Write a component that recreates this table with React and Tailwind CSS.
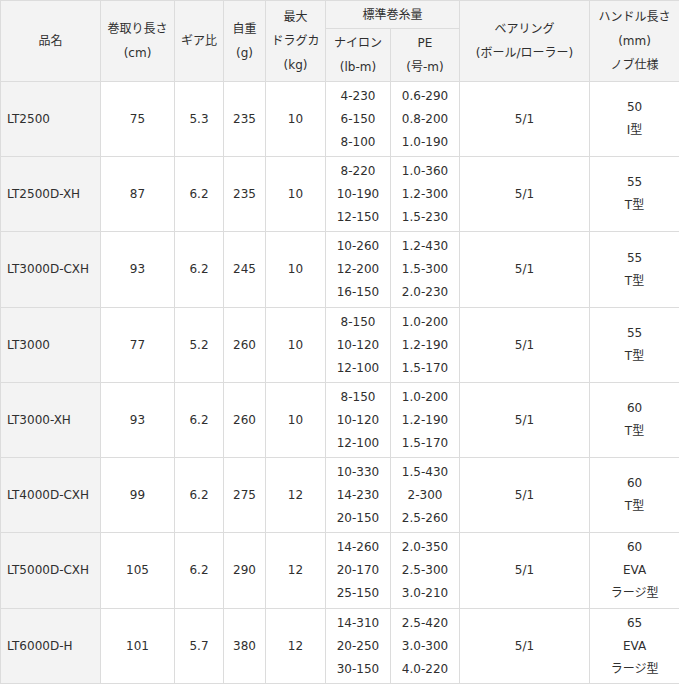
const rows = [
  { name: "LT2500", len: "75", gear: "5.3", weight: "235", drag: "10", nylon: ["4-230", "6-150", "8-100"], pe: ["0.6-290", "0.8-200", "1.0-190"], bearing: "5/1", handle: ["50", "I型"], h: "h-[75px]" },
  { name: "LT2500D-XH", len: "87", gear: "6.2", weight: "235", drag: "10", nylon: ["8-220", "10-190", "12-150"], pe: ["1.0-360", "1.2-300", "1.5-230"], bearing: "5/1", handle: ["55", "T型"], h: "h-[75px]" },
  { name: "LT3000D-CXH", len: "93", gear: "6.2", weight: "245", drag: "10", nylon: ["10-260", "12-200", "16-150"], pe: ["1.2-430", "1.5-300", "2.0-230"], bearing: "5/1", handle: ["55", "T型"], h: "h-[76px]" },
  { name: "LT3000", len: "77", gear: "5.2", weight: "260", drag: "10", nylon: ["8-150", "10-120", "12-100"], pe: ["1.0-200", "1.2-190", "1.5-170"], bearing: "5/1", handle: ["55", "T型"], h: "h-[75px]" },
  { name: "LT3000-XH", len: "93", gear: "6.2", weight: "260", drag: "10", nylon: ["8-150", "10-120", "12-100"], pe: ["1.0-200", "1.2-190", "1.5-170"], bearing: "5/1", handle: ["60", "T型"], h: "h-[75px]" },
  { name: "LT4000D-CXH", len: "99", gear: "6.2", weight: "275", drag: "12", nylon: ["10-330", "14-230", "20-150"], pe: ["1.5-430", "2-300", "2.5-260"], bearing: "5/1", handle: ["60", "T型"], h: "h-[75px]" },
  { name: "LT5000D-CXH", len: "105", gear: "6.2", weight: "290", drag: "12", nylon: ["14-260", "20-170", "25-150"], pe: ["2.0-350", "2.5-300", "3.0-210"], bearing: "5/1", handle: ["60", "EVA", "ラージ型"], h: "h-[76px]" },
  { name: "LT6000D-H", len: "101", gear: "5.7", weight: "380", drag: "12", nylon: ["14-310", "20-250", "30-150"], pe: ["2.5-420", "3.0-300", "4.0-220"], bearing: "5/1", handle: ["65", "EVA", "ラージ型"], h: "h-[75px]" },
];

const th = "border border-[#dcdcdc] bg-[#f3f3f3] font-normal text-center align-middle p-0 leading-[24px]";
const td = "border border-[#dcdcdc] text-center align-middle p-0 leading-[23px]";

const Lines = ({ items }) => (
  <>
    {items.map((t, i) => (
      <div key={i}>{t}</div>
    ))}
  </>
);

export default function App() {
  return (
    <div
      className="w-[679px] bg-white text-[#2f2f2f] text-[12px]"
      style={{ fontFamily: '"DejaVu Sans", "Noto Sans CJK JP", sans-serif' }}
    >
      <table className="table-fixed border-collapse w-[679px]">
        <colgroup>
          <col className="w-[100px]" />
          <col className="w-[74px]" />
          <col className="w-[49px]" />
          <col className="w-[42px]" />
          <col className="w-[60px]" />
          <col className="w-[65px]" />
          <col className="w-[69px]" />
          <col className="w-[130px]" />
          <col className="w-[90px]" />
        </colgroup>
        <thead>
          <tr className="h-[28px]">
            <th rowSpan={2} className={th}>品名</th>
            <th rowSpan={2} className={th}>
              <div>巻取り長さ</div>
              <div>(cm)</div>
            </th>
            <th rowSpan={2} className={th}>ギア比</th>
            <th rowSpan={2} className={th}>
              <div>自重</div>
              <div>(g)</div>
            </th>
            <th rowSpan={2} className={th}>
              <div>最大</div>
              <div>ドラグカ</div>
              <div>(kg)</div>
            </th>
            <th colSpan={2} className={th}>標準巻糸量</th>
            <th rowSpan={2} className={th}>
              <div>ベアリング</div>
              <div>(ボール/ローラー)</div>
            </th>
            <th rowSpan={2} className={th}>
              <div>ハンドル長さ</div>
              <div>(mm)</div>
              <div>ノブ仕様</div>
            </th>
          </tr>
          <tr className="h-[53px]">
            <th className={th}>
              <div>ナイロン</div>
              <div>(lb-m)</div>
            </th>
            <th className={th}>
              <div>PE</div>
              <div>(号-m)</div>
            </th>
          </tr>
        </thead>
        <tbody>
          {rows.map((r) => (
            <tr key={r.name} className={r.h}>
              <td className={`${td} !text-left pl-[6px] bg-[#f3f3f3]`}>{r.name}</td>
              <td className={td}>{r.len}</td>
              <td className={td}>{r.gear}</td>
              <td className={td}>{r.weight}</td>
              <td className={td}>{r.drag}</td>
              <td className={td}><Lines items={r.nylon} /></td>
              <td className={td}><Lines items={r.pe} /></td>
              <td className={td}>{r.bearing}</td>
              <td className={td}><Lines items={r.handle} /></td>
            </tr>
          ))}
        </tbody>
      </table>
    </div>
  );
}
